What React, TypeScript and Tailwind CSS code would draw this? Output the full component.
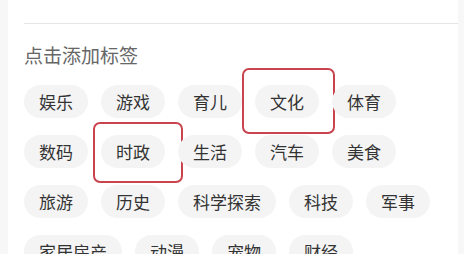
const ROWS: string[] = [
  '娱乐', '游戏', '育儿', '文化', '体育',
  '数码', '时政', '生活', '汽车', '美食',
  '旅游', '历史', '科学探索', '科技', '军事',
  '家居房产', '动漫', '宠物', '财经',
];

// hand-drawn red boxes around two tags, offsets relative to the pill
const MARKS: Record<string, string> = {
  '文化': '-left-[13px] -right-[16px] -top-[17px] -bottom-[16px]',
  '时政': '-left-[8px] -right-[18px] -top-[13px] -bottom-[15px]',
};

function Tag({ label }: { label: string }) {
  const mark = MARKS[label];
  return (
    <div className="relative">
      <div className="h-[33px] px-[15px] flex items-center rounded-full bg-[#f4f4f4] text-[17px] text-[#333]">
        {label}
      </div>
      {mark && (
        <div className={`absolute ${mark} border-[2.5px] border-[#c9444f] rounded-[7px] pointer-events-none`} />
      )}
    </div>
  );
}

export default function App() {
  return (
    <div
      className="w-[464px] h-[254px] overflow-hidden bg-[#f7f7f7] flex"
      style={{ fontFamily: '"Noto Sans CJK SC", "Noto Sans", sans-serif' }}
    >
      <div className="ml-[8px] w-[450px] bg-white pl-4 shrink-0">
        {/* cut-off line above */}
        <div className="-mt-[19px] h-[20px] leading-[20px] pl-[9px] text-[16px] text-[#b0b0b0]">已选标签</div>

        <div className="mt-[22px] border-t border-[#e6e6e6]" />

        <div className="mt-[18px] text-[19px] leading-[26px] text-[#666]">点击添加标签</div>

        <div className="mt-[17px] pr-2 flex flex-wrap gap-x-[13px] gap-y-[17px]">
          {ROWS.map((t) => (
            <Tag key={t} label={t} />
          ))}
        </div>
      </div>
    </div>
  );
}
